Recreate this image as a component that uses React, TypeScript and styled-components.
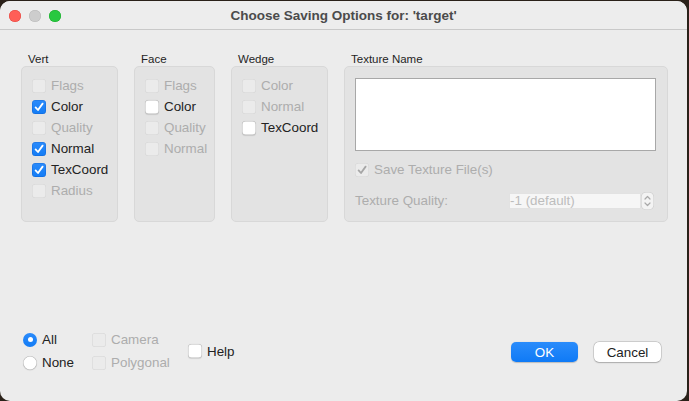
import React from 'react';
import styled, { createGlobalStyle, css } from 'styled-components';

const Global = createGlobalStyle`
  html, body { margin: 0; padding: 0; background: #2a2119; }
  body {
    width: 689px; height: 401px; overflow: hidden;
    font-family: "Liberation Sans", Arial, sans-serif;
    -webkit-font-smoothing: antialiased;
  }
`;

const Window = styled.div`
  margin-top: 1px;
  width: 687px;
  height: 400px;
  background: #ececec;
  border-radius: 10px;
  overflow: hidden;
  display: flex;
  flex-direction: column;
`;

const TitleBar = styled.div`
  flex: none;
  height: 28px;
  border-bottom: 1px solid #c9c9c9;
  background: #ededed;
  display: grid;
  grid-template-columns: 1fr auto 1fr;
  align-items: center;
`;

const Lights = styled.div`
  display: flex;
  gap: 8px;
  padding-left: 9px;
  padding-top: 1px;
`;

const Light = styled.span<{ $c: string; $b: string }>`
  width: 12px;
  height: 12px;
  border-radius: 50%;
  background: ${(p) => p.$c};
  box-shadow: inset 0 0 0 0.5px ${(p) => p.$b};
`;

const Title = styled.div`
  font-weight: bold;
  font-size: 13.5px;
  color: #4b4b4b;
  padding-top: 1px;
`;

const Content = styled.div`
  flex: 1;
  display: flex;
  flex-direction: column;
  padding: 22px 0 27px 21px;
`;

const Groups = styled.div`
  display: flex;
  gap: 16px;
  align-items: flex-start;
`;

const Group = styled.div<{ $w: number }>`
  width: ${(p) => p.$w}px;
  display: flex;
  flex-direction: column;
`;

const GroupLabel = styled.div`
  height: 14px;
  line-height: 14px;
  font-size: 11.5px;
  color: #1f1f1f;
  padding-left: 7px;
`;

const Box = styled.div<{ $pad?: string }>`
  height: 156px;
  box-sizing: border-box;
  background: #e3e3e3;
  border: 1px solid #d8d8d8;
  border-radius: 5px;
  padding: ${(p) => p.$pad || '8px 0 0 10px'};
  display: flex;
  flex-direction: column;
`;

const Row = styled.label<{ $disabled?: boolean; $mt?: number }>`
  height: 21px;
  display: flex;
  align-items: center;
  gap: 5px;
  font-size: 13.4px;
  color: ${(p) => (p.$disabled ? '#adadad' : '#222222')};
  margin-top: ${(p) => p.$mt || 0}px;
  white-space: nowrap;
`;

type CheckState = 'on' | 'off' | 'dis' | 'dison';

const CheckBox = styled.span<{ $s: CheckState }>`
  flex: none;
  width: 14px;
  height: 14px;
  box-sizing: border-box;
  border-radius: 3.5px;
  display: flex;
  align-items: center;
  justify-content: center;
  ${(p) =>
    p.$s === 'on'
      ? css`
          background: linear-gradient(#2b8bfb, #137cf5);
          box-shadow: inset 0 0 0 0.5px rgba(0, 60, 160, 0.35);
        `
      : p.$s === 'off'
      ? css`
          background: #ffffff;
          box-shadow: inset 0 0 0 0.5px rgba(0, 0, 0, 0.28), 0 0.5px 1px rgba(0, 0, 0, 0.12);
        `
      : css`
          background: #ebebeb;
          box-shadow: inset 0 0 0 0.5px rgba(0, 0, 0, 0.1);
        `}
`;

const Check: React.FC<{ s: CheckState }> = ({ s }) => (
  <CheckBox $s={s}>
    {(s === 'on' || s === 'dison') && (
      <svg width="14" height="14" viewBox="0 0 14 14">
        <polyline
          points="3.6,7.4 6,10 10.6,3.6"
          fill="none"
          stroke={s === 'on' ? '#ffffff' : '#a6a6a6'}
          strokeWidth="1.8"
          strokeLinecap="round"
          strokeLinejoin="round"
        />
      </svg>
    )}
  </CheckBox>
);

const Item: React.FC<{ label: string; s: CheckState; mt?: number }> = ({ label, s, mt }) => (
  <Row $disabled={s === 'dis' || s === 'dison'} $mt={mt}>
    <Check s={s} />
    {label}
  </Row>
);

const TextArea = styled.div`
  width: 301px;
  height: 73px;
  box-sizing: border-box;
  background: #ffffff;
  border: 1px solid #a8a8a8;
  flex: none;
`;

const QualityRow = styled.div`
  width: 299px;
  height: 21px;
  margin-top: 10px;
  display: flex;
  align-items: center;
  font-size: 13.4px;
  color: #adadad;
`;

const QualityLabel = styled.span`
  flex: 1;
`;

const QualityInput = styled.div`
  width: 132px;
  height: 16px;
  box-sizing: border-box;
  background: #f6f6f6;
  border: 1px solid #e2e2e2;
  font-size: 13.4px;
  line-height: 14px;
  color: #bdbdbd;
  padding-left: 0;
`;

const Stepper = styled.div`
  width: 13px;
  height: 18px;
  box-sizing: border-box;
  border-radius: 5px;
  background: #f3f3f3;
  box-shadow: inset 0 0 0 0.5px rgba(0, 0, 0, 0.18);
  display: flex;
  align-items: center;
  justify-content: center;
`;

const Footer = styled.div`
  margin-top: auto;
  display: flex;
  align-items: center;
  padding-left: 2px;
  padding-right: 26px;
`;

const Column = styled.div<{ $w: number }>`
  width: ${(p) => p.$w}px;
  display: flex;
  flex-direction: column;
`;

const RadioRow = styled.label<{ $disabled?: boolean }>`
  height: 23px;
  display: flex;
  align-items: center;
  gap: 5px;
  font-size: 13.4px;
  color: ${(p) => (p.$disabled ? '#adadad' : '#222222')};
`;

const RadioDot = styled.span<{ $on?: boolean }>`
  flex: none;
  width: 14px;
  height: 14px;
  box-sizing: border-box;
  border-radius: 50%;
  display: flex;
  align-items: center;
  justify-content: center;
  ${(p) =>
    p.$on
      ? css`
          background: linear-gradient(#2b8bfb, #137cf5);
          &::after {
            content: '';
            width: 5px;
            height: 5px;
            border-radius: 50%;
            background: #ffffff;
          }
        `
      : css`
          background: #ffffff;
          box-shadow: inset 0 0 0 0.5px rgba(0, 0, 0, 0.28), 0 0.5px 1px rgba(0, 0, 0, 0.12);
        `}
`;

const Buttons = styled.div`
  margin-left: auto;
  display: flex;
  gap: 16px;
  padding-top: 2px;
`;

const Button = styled.button<{ $primary?: boolean }>`
  width: 67px;
  height: 20px;
  border: none;
  border-radius: 5px;
  font-family: inherit;
  font-size: 13.4px;
  padding: 0;
  ${(p) =>
    p.$primary
      ? css`
          background: linear-gradient(#2a8cfb, #0f7af6);
          color: #ffffff;
          box-shadow: 0 0.5px 1px rgba(0, 0, 0, 0.2);
        `
      : css`
          background: #ffffff;
          color: #222222;
          box-shadow: 0 0 0 0.5px rgba(0, 0, 0, 0.2), 0 0.5px 1.5px rgba(0, 0, 0, 0.2);
        `}
`;

export default function App() {
  return (
    <>
      <Global />
      <Window>
        <TitleBar>
          <Lights>
            <Light $c="#ff5f57" $b="#e2463f" />
            <Light $c="#cdcdcd" $b="#b8b8b8" />
            <Light $c="#28c840" $b="#1aab29" />
          </Lights>
          <Title>Choose Saving Options for: 'target'</Title>
          <div />
        </TitleBar>
        <Content>
          <Groups>
            <Group $w={97}>
              <GroupLabel>Vert</GroupLabel>
              <Box>
                <Item label="Flags" s="dis" />
                <Item label="Color" s="on" />
                <Item label="Quality" s="dis" />
                <Item label="Normal" s="on" />
                <Item label="TexCoord" s="on" />
                <Item label="Radius" s="dis" />
              </Box>
            </Group>
            <Group $w={81}>
              <GroupLabel>Face</GroupLabel>
              <Box>
                <Item label="Flags" s="dis" />
                <Item label="Color" s="off" />
                <Item label="Quality" s="dis" />
                <Item label="Normal" s="dis" />
              </Box>
            </Group>
            <Group $w={97}>
              <GroupLabel>Wedge</GroupLabel>
              <Box>
                <Item label="Color" s="dis" />
                <Item label="Normal" s="dis" />
                <Item label="TexCoord" s="off" />
              </Box>
            </Group>
            <Group $w={324}>
              <GroupLabel>Texture Name</GroupLabel>
              <Box $pad="11px 11px 0 10px">
                <TextArea />
                <Item label="Save Texture File(s)" s="dison" mt={8} />
                <QualityRow>
                  <QualityLabel>Texture Quality:</QualityLabel>
                  <QualityInput>-1 (default)</QualityInput>
                  <Stepper>
                    <svg width="9" height="14" viewBox="0 0 9 14">
                      <polyline points="2,5 4.5,2.5 7,5" fill="none" stroke="#a9a9a9" strokeWidth="1.2" strokeLinecap="round" strokeLinejoin="round" />
                      <polyline points="2,9 4.5,11.5 7,9" fill="none" stroke="#a9a9a9" strokeWidth="1.2" strokeLinecap="round" strokeLinejoin="round" />
                    </svg>
                  </Stepper>
                </QualityRow>
              </Box>
            </Group>
          </Groups>
          <Footer>
            <Column $w={69}>
              <RadioRow>
                <RadioDot $on />
                All
              </RadioRow>
              <RadioRow>
                <RadioDot />
                None
              </RadioRow>
            </Column>
            <Column $w={96}>
              <RadioRow $disabled>
                <Check s="dis" />
                Camera
              </RadioRow>
              <RadioRow $disabled>
                <Check s="dis" />
                Polygonal
              </RadioRow>
            </Column>
            <RadioRow>
              <Check s="off" />
              Help
            </RadioRow>
            <Buttons>
              <Button $primary>OK</Button>
              <Button>Cancel</Button>
            </Buttons>
          </Footer>
        </Content>
      </Window>
    </>
  );
}
